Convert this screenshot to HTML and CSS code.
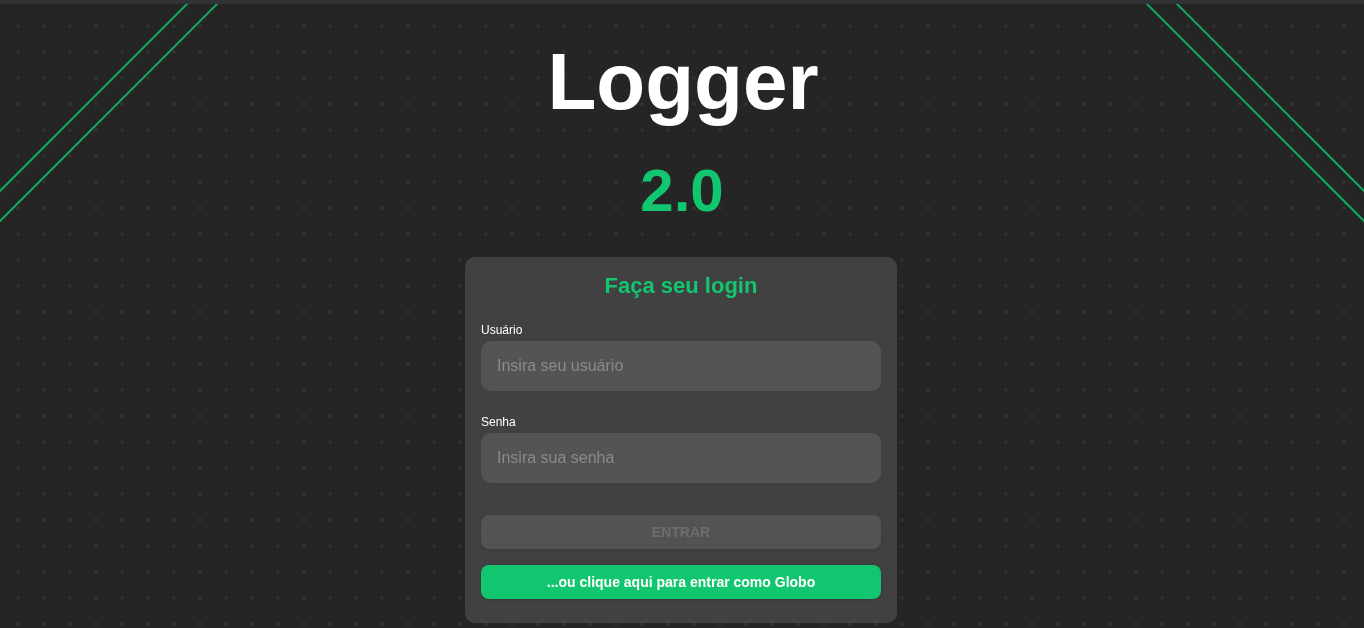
FILE: index.html
```html
<!DOCTYPE html>
<html lang="pt-BR">
<head>
<meta charset="utf-8">
<title>Logger 2.0</title>
<link rel="stylesheet" href="styles.css">
</head>
<body>
<div class="topbar"></div>
<svg class="deco deco-left" width="240" height="240" viewBox="0 0 240 240" aria-hidden="true">
  <line x1="-2" y1="193" x2="193" y2="-2" />
  <line x1="-2" y1="223" x2="223" y2="-2" />
</svg>
<svg class="deco deco-right" width="240" height="240" viewBox="0 0 240 240" aria-hidden="true">
  <line x1="47" y1="-2" x2="242" y2="193" />
  <line x1="17" y1="-2" x2="242" y2="223" />
</svg>
<main class="page">
  <h1 class="brand">Logger</h1>
  <div class="version">2.0</div>
  <form class="card">
    <h2 class="card-title">Faça seu login</h2>
    <div class="field">
      <label class="field-label" for="user">Usuário</label>
      <input class="field-input" id="user" type="text" placeholder="Insira seu usuário">
    </div>
    <div class="field">
      <label class="field-label" for="pass">Senha</label>
      <input class="field-input" id="pass" type="password" placeholder="Insira sua senha">
    </div>
    <button class="btn btn-disabled" type="button">ENTRAR</button>
    <button class="btn btn-green" type="button">...ou clique aqui para entrar como Globo</button>
  </form>
</main>
</body>
</html>
```

FILE: styles.css
```css
* { box-sizing: border-box; }

html, body {
  margin: 0;
  padding: 0;
  height: 100%;
  overflow: hidden;
}

body {
  font-family: "Liberation Sans", Arial, sans-serif;
  background-color: #252525;
  background-image: radial-gradient(circle, #353535 0, #353535 1.1px, rgba(37,37,37,0) 2px);
  background-size: 26px 26px;
  background-position: 5px 13px;
  color: #fff;
}

.topbar {
  position: relative;
  z-index: 2;
  height: 4px;
  background: #323236;
}

.deco {
  position: fixed;
  top: 0;
  z-index: 0;
}
.deco line {
  stroke: #10a85e;
  stroke-width: 2;
}
.deco-left { left: 0; }
.deco-right { right: 0; }

.page {
  position: relative;
  z-index: 1;
  display: flex;
  flex-direction: column;
  align-items: center;
  padding-top: 33px;
}

.brand {
  margin: 0 0 0 2px;
  font-size: 80px;
  line-height: 90px;
  font-weight: 700;
  color: #ffffff;
}

.version {
  margin-top: 30px;
  font-size: 60px;
  line-height: 68px;
  font-weight: 700;
  color: #12c66f;
}

.card {
  margin-top: 32px;
  margin-right: 2px;
  width: 432px;
  background: #414141;
  border-radius: 10px;
  padding: 16px 16px 24px;
  display: flex;
  flex-direction: column;
}

.card-title {
  margin: 0 0 25px;
  text-align: center;
  font-size: 22px;
  line-height: 25px;
  font-weight: 700;
  color: #12c66f;
}

.field {
  display: flex;
  flex-direction: column;
  gap: 4px;
  margin-bottom: 24px;
}
.field + .field { margin-bottom: 32px; }

.field-label {
  font-size: 12px;
  line-height: 14px;
  color: #ffffff;
}

.field-input {
  height: 50px;
  border: none;
  outline: none;
  border-radius: 10px;
  background: #545454;
  padding: 0 16px;
  font-family: "Liberation Sans", Arial, sans-serif;
  font-size: 16px;
  color: #eee;
}
.field-input::placeholder { color: #8a8a8a; }

.btn {
  height: 34px;
  border: none;
  border-radius: 8px;
  font-family: "Liberation Sans", Arial, sans-serif;
  font-size: 14px;
  font-weight: 700;
  padding: 0;
}
.btn-disabled {
  background: #535353;
  color: #6d6d6d;
  box-shadow: 0 1px 3px rgba(0,0,0,0.12);
}
.btn-green {
  margin-top: 16px;
  background: #12c66f;
  color: #ffffff;
  box-shadow: 0 1px 3px rgba(0,0,0,0.12);
}
```
